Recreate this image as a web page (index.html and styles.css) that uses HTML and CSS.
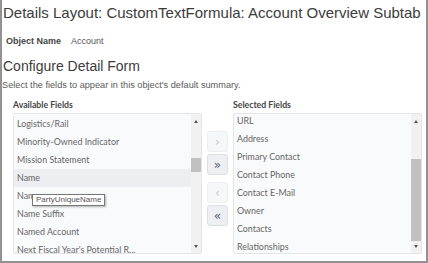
FILE: index.html
```html
<!DOCTYPE html>
<html lang="en">
<head>
    <meta charset="UTF-8">
    <title>Details Layout</title>
    <link rel="stylesheet" href="styles.css">
</head>
<body>
    <div class="frame">
        <h1 class="title">Details Layout: CustomTextFormula: Account Overview Subtab</h1>
        <div class="meta">
            <span class="meta-label">Object Name</span>
            <span class="meta-value">Account</span>
        </div>
        <h2 class="section">Configure Detail Form</h2>
        <p class="hint">Select the fields to appear in this object's default summary.</p>
        <div class="shuttle">
            <div class="column">
                <div class="column-label">Available Fields</div>
                <div class="listbox">
                    <ul class="items">
                        <li>Logistics/Rail</li>
                        <li>Minority-Owned Indicator</li>
                        <li>Mission Statement</li>
                        <li class="hover">Name</li>
                        <li>Name
                            <span class="tooltip">PartyUniqueName</span>
                        </li>
                        <li>Name Suffix</li>
                        <li>Named Account</li>
                        <li>Next Fiscal Year's Potential R...</li>
                    </ul>
                    <div class="scrollbar">
                        <span class="arrow up"></span>
                        <div class="track">
                            <div class="thumb" style="margin-top: 31px; height: 14px;"></div>
                        </div>
                        <span class="arrow down"></span>
                    </div>
                </div>
            </div>
            <div class="buttons">
                <div class="pair">
                    <button class="move disabled">&rsaquo;</button>
                    <button class="move">&raquo;</button>
                </div>
                <div class="pair">
                    <button class="move disabled">&lsaquo;</button>
                    <button class="move">&laquo;</button>
                </div>
            </div>
            <div class="column">
                <div class="column-label">Selected Fields</div>
                <div class="listbox">
                    <ul class="items scrolled">
                        <li>URL</li>
                        <li>Address</li>
                        <li>Primary Contact</li>
                        <li>Contact Phone</li>
                        <li>Contact E-Mail</li>
                        <li>Owner</li>
                        <li>Contacts</li>
                        <li>Relationships</li>
                    </ul>
                    <div class="scrollbar">
                        <span class="arrow up"></span>
                        <div class="track">
                            <div class="thumb" style="margin-top: 32px; height: 82px;"></div>
                        </div>
                        <span class="arrow down"></span>
                    </div>
                </div>
            </div>
        </div>
    </div>
</body>
</html>
```

FILE: styles.css
```css
body {
    margin: 0;
    padding: 0;
    background: #fff;
    font-family: "Liberation Sans", Arial, sans-serif;
}
.frame {
    box-sizing: border-box;
    width: 428px;
    height: 263px;
    border: 2px solid #929292;
    border-top: none;
    overflow: hidden;
}
.title {
    margin: 0;
    padding: 2px 0 0 1px;
    font-size: 15px;
    font-weight: normal;
    line-height: 22px;
    color: #3c3c3c;
    white-space: nowrap;
}
.meta {
    display: flex;
    margin: 11px 0 0 4px;
    font-size: 9px;
    line-height: 12px;
    color: #555;
}
.meta-label {
    font-weight: bold;
    color: #444;
    width: 65px;
}
.section {
    margin: 10px 0 0 1px;
    font-size: 14px;
    font-weight: normal;
    line-height: 18px;
    color: #3c3c3c;
}
.hint {
    margin: 5px 0 0 0;
    font-size: 9.2px;
    line-height: 11px;
    color: #5a5a5a;
    white-space: nowrap;
}
.shuttle {
    display: flex;
    margin: 8px 0 0 11px;
}
.column {
    display: flex;
    flex-direction: column;
    width: 189px;
}
.column-label {
    font-family: Lato, sans-serif;
    font-size: 8.7px;
    font-weight: bold;
    line-height: 12px;
    color: #444;
    margin-bottom: 2px;
}
.listbox {
    box-sizing: border-box;
    display: flex;
    height: 141px;
    background: #f9fafc;
    border: 1px solid #e3e5e8;
    border-radius: 2px;
    overflow: hidden;
}
.items {
    flex: 1;
    margin: 0;
    padding: 1px 0 0 0;
    list-style: none;
    font-family: Lato, sans-serif;
    font-size: 8.9px;
    color: #666;
}
.items.scrolled {
    margin-top: -3px;
}
.items li {
    position: relative;
    height: 18px;
    line-height: 18px;
    padding-left: 3px;
    white-space: nowrap;
}
.items li.hover {
    background: #eceef1;
}
.tooltip {
    position: absolute;
    left: 18px;
    top: 7px;
    padding: 0 3px;
    font-family: "Liberation Sans", Arial, sans-serif;
    font-size: 8px;
    line-height: 10px;
    color: #555;
    background: #fff;
    border: 1px solid #777;
    box-shadow: 1px 1px 2px rgba(0, 0, 0, 0.3);
}
.scrollbar {
    display: flex;
    flex-direction: column;
    align-items: center;
    width: 10px;
    background: #f1f1f1;
}
.arrow {
    width: 0;
    height: 0;
    border-left: 2.5px solid transparent;
    border-right: 2.5px solid transparent;
}
.arrow.up {
    margin: 6px 0 4px;
    border-bottom: 3px solid #555;
}
.arrow.down {
    margin: 4px 0 5px;
    border-top: 3px solid #555;
}
.track {
    flex: 1;
    width: 100%;
}
.thumb {
    width: 100%;
    background: #c1c1c1;
}
.buttons {
    display: flex;
    flex-direction: column;
    gap: 7px;
    margin: 32px 5px 0;
}
.pair {
    display: flex;
    flex-direction: column;
    gap: 2px;
}
.move {
    box-sizing: border-box;
    width: 21px;
    height: 21px;
    padding: 0;
    font-family: "DejaVu Sans", sans-serif;
    font-size: 12px;
    line-height: 18px;
    color: #5a6472;
    background: #edeff2;
    border: 1px solid #dcdfe3;
    border-radius: 3px;
}
.move.disabled {
    color: #c8ccd2;
    background: #f6f7f9;
    border-color: #eceef1;
}
```
